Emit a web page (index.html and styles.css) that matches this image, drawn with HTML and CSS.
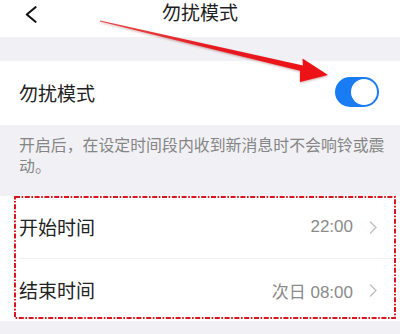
FILE: index.html
```html
<!DOCTYPE html>
<html lang="zh-CN">
<head>
<meta charset="utf-8">
<title>勿扰模式</title>
<link rel="stylesheet" href="styles.css">
</head>
<body>
<div class="page">
  <header class="header">
    <div class="back">
      <svg width="14" height="17" viewBox="0 0 14 17"><path d="M11.5 1.2 L2.8 8.5 L11.5 15.8" fill="none" stroke="#111" stroke-width="2.1" stroke-linecap="round" stroke-linejoin="round"/></svg>
    </div>
    <div class="title">勿扰模式</div>
    <div></div>
  </header>
  <div class="band"></div>
  <div class="toggle-row">
    <span class="label">勿扰模式</span>
    <span class="switch"><span class="knob"></span></span>
  </div>
  <p class="desc"><span class="line">开启后，在设定时间段内收到新消息时不会响铃或震</span><span class="line">动。</span></p>
  <div class="rows">
    <div class="row">
      <span class="label">开始时间</span>
      <span class="value">22:00</span>
      <svg class="chev" width="9" height="13" viewBox="0 0 9 13"><path d="M1.5 1 L7 6.5 L1.5 12" fill="none" stroke="#c2c2c2" stroke-width="1.5" stroke-linecap="round" stroke-linejoin="round"/></svg>
    </div>
    <div class="sep"></div>
    <div class="row">
      <span class="label">结束时间</span>
      <span class="value">次日 08:00</span>
      <svg class="chev" width="9" height="13" viewBox="0 0 9 13"><path d="M1.5 1 L7 6.5 L1.5 12" fill="none" stroke="#c2c2c2" stroke-width="1.5" stroke-linecap="round" stroke-linejoin="round"/></svg>
    </div>
    <svg class="dashbox" width="382" height="123" viewBox="0 0 382 123"><rect x="1" y="1" width="380" height="121" fill="none" stroke="#d8161f" stroke-width="2" stroke-dasharray="5 1.6 1.6 1.6"/></svg>
  </div>
  <svg class="arrow" width="400" height="334" viewBox="0 0 400 334">
    <defs>
      <linearGradient id="ag" x1="100" y1="21" x2="328" y2="75" gradientUnits="userSpaceOnUse">
        <stop offset="0" stop-color="#e84a4a"/>
        <stop offset="0.5" stop-color="#e51a1f"/>
        <stop offset="1" stop-color="#ee1115"/>
      </linearGradient>
    </defs>
    <polygon points="100,20.4 303,65.6 302.5,58.5 328,75 300,82 300,70.8 100,21.6" fill="url(#ag)"/>
  </svg>
</div>
</body>
</html>
```
FILE: styles.css
```css
html, body {
  margin: 0;
  padding: 0;
}
body {
  width: 400px;
  height: 334px;
  overflow: hidden;
  background: #f1f1f5;
  font-family: "Noto Sans CJK SC", "Noto Sans", sans-serif;
  color: #222;
}
.page {
  position: relative;
  width: 400px;
  height: 334px;
}
.header {
  height: 37px;
  background: #fff;
  display: grid;
  grid-template-columns: 70px 1fr 70px;
  align-items: start;
}
.back {
  padding-left: 24px;
  padding-top: 6px;
  height: 24px;
  display: flex;
  align-items: flex-start;
}
.title {
  text-align: center;
  font-size: 19px;
  line-height: 24px;
  padding-top: 0;
  color: #1e1e1e;
}
.band {
  height: 24px;
}
.toggle-row {
  height: 64px;
  background: #fff;
  display: flex;
  align-items: center;
  justify-content: space-between;
  padding: 0 21px 0 19px;
}
.label {
  font-size: 19px;
  line-height: 24px;
  color: #222;
}
.switch {
  width: 44px;
  height: 30px;
  border-radius: 15px;
  background: #1a7cf2;
  display: flex;
  align-items: center;
  justify-content: flex-end;
  padding-right: 2px;
  box-sizing: border-box;
  margin-top: -2px;
}
.knob {
  width: 26px;
  height: 26px;
  border-radius: 50%;
  background: #fff;
}
.desc {
  margin: 0;
  padding: 9px 10px 20px 19px;
  font-size: 15.9px;
  line-height: 21px;
  color: #858585;
  height: 42px;
}
.line {
  display: block;
  white-space: nowrap;
}
.rows {
  position: relative;
  background: #fff;
}
.row {
  height: 62px;
  display: flex;
  align-items: center;
  padding: 0 22px 0 19px;
}
.row .label {
  flex: 1;
}
.value {
  font-family: "Liberation Sans", "Noto Sans CJK SC", sans-serif;
  font-size: 17px;
  color: #8a8a8a;
  margin-right: 16px;
}
.sep {
  height: 1px;
  background: #efefef;
  margin-left: 19px;
}
.dashbox {
  position: absolute;
  left: 14px;
  top: 0;
}
.arrow {
  position: absolute;
  left: 0;
  top: 0;
  pointer-events: none;
  filter: drop-shadow(0 1px 1px rgba(120, 0, 0, 0.35));
}
```
